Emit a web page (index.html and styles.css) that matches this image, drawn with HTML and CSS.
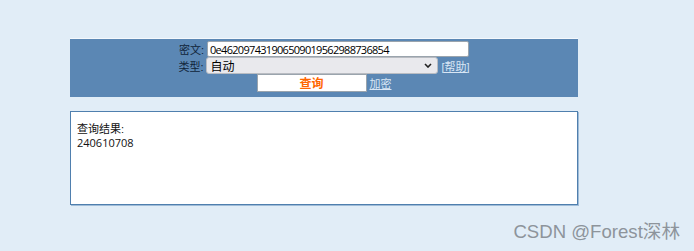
FILE: index.html
```html
<!DOCTYPE html>
<html lang="zh-CN">

<head>
	<meta charset="UTF-8">
	<title>MD5解密</title>
	<link rel="stylesheet" href="styles.css">
</head>

<body>
	<div class="main">
		<form class="query-panel">
			<div class="row">
				<label for="cipher">密文:</label>
				<input type="text" id="cipher" class="cipher-input" value="0e462097431906509019562988736854" />
			</div>
			<div class="row">
				<label for="type">类型:</label>
				<span class="select-wrap">
					<select id="type" class="type-select">
						<option selected>自动</option>
						<option>md5</option>
						<option>sha1</option>
					</select>
					<svg class="chevron" width="8" height="5" viewBox="0 0 8 5">
						<path d="M1 1 L4 4 L7 1" fill="none" stroke="#222" stroke-width="1.6" />
					</svg>
				</span>
				<a href="#" class="link">[帮助]</a>
			</div>
			<div class="row">
				<button type="button" class="query-btn">查询</button>
				<a href="#" class="link">加密</a>
			</div>
		</form>

		<div class="result">
			<div>查询结果:</div>
			<div class="result-value">240610708</div>
		</div>
	</div>

	<div class="watermark">CSDN @Forest深林</div>
</body>

</html>
```

FILE: styles.css
```css
* {
	box-sizing: border-box;
}

body {
	margin: 0;
	background-color: #e1edf7;
	font-family: 'Liberation Sans', 'Noto Sans CJK SC', sans-serif;
	font-size: 11px;
	color: #111;
	height: 251px;
	overflow: hidden;
}

.main {
	width: 508px;
	margin-left: 70px;
	padding-top: 38px;
}

.query-panel {
	background-color: #5b87b4;
	border-top: 1px solid #f4f8fc;
	height: 59px;
	padding-top: 2px;
	margin: 0;
}

.row {
	display: flex;
	justify-content: center;
	align-items: center;
	gap: 3px;
}

.row label {
	color: #10243a;
	font-size: 11px;
}

.cipher-input {
	width: 262px;
	height: 16px;
	margin: 0;
	padding: 0 2px;
	border: 1px solid #9aa4ad;
	border-radius: 2px;
	font-family: 'Open Sans', sans-serif;
	font-size: 11px;
	letter-spacing: -0.7px;
	color: #000;
	background: #fff;
}

.select-wrap {
	position: relative;
	display: flex;
}

.type-select {
	appearance: none;
	width: 232px;
	height: 17px;
	margin: 0;
	padding: 0 3px;
	border: 1px solid #b9bcc2;
	border-radius: 3px;
	background-color: #e9e9ed;
	font-family: 'Noto Sans CJK SC', sans-serif;
	font-size: 12px;
	line-height: 15px;
	color: #000;
}

.chevron {
	position: absolute;
	right: 6px;
	top: 6px;
	pointer-events: none;
}

.link {
	color: #d8e6f5;
	font-size: 11px;
}

.query-btn {
	width: 110px;
	height: 18px;
	margin: 0;
	padding: 0;
	border: 1px solid #9aa4ad;
	background: #fff;
	color: #ff6600;
	font-family: 'Noto Sans CJK SC', sans-serif;
	font-weight: 700;
	font-size: 12px;
	line-height: 16px;
	cursor: pointer;
}

.result {
	margin-top: 14px;
	height: 94px;
	background: #fff;
	border: 1px solid #4f7fae;
	box-shadow: 1px 1px 0 #9fbcd8;
	padding: 10px 6px;
	line-height: 14px;
}

.result-value {
	font-family: 'Open Sans', sans-serif;
}

.watermark {
	position: absolute;
	right: 14px;
	bottom: 8px;
	color: #8d949b;
	font-size: 18.6px;
	font-family: 'Liberation Sans', 'Noto Sans CJK SC', sans-serif;
}
```
